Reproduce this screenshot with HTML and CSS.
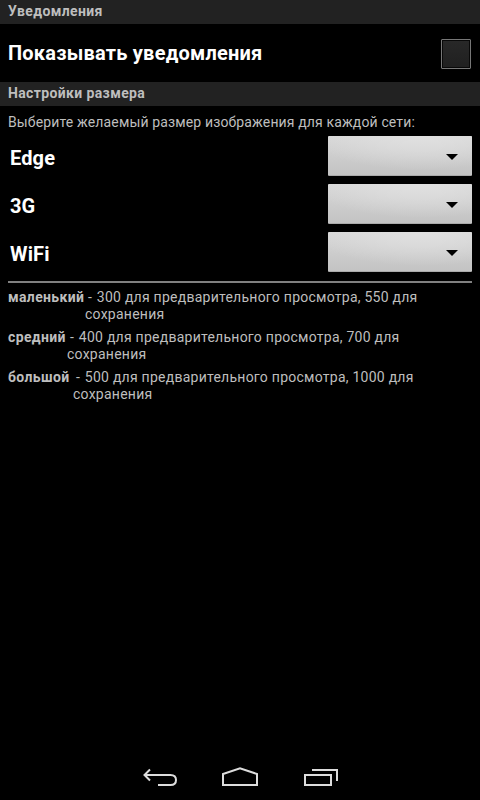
FILE: index.html
```html
<!DOCTYPE html>
<html lang="ru">
<head>
<meta charset="utf-8">
<title>Настройки</title>
<link rel="stylesheet" href="styles.css">
</head>
<body>
<main class="screen">
  <h2 class="section">Уведомления</h2>
  <div class="toggle"><span class="toggle-label">Показывать уведомления</span><span class="checkbox"></span></div>
  <h2 class="section">Настройки размера</h2>
  <p class="hint">Выберите желаемый размер изображения для каждой сети:</p>
  <div class="network"><span class="name">Edge</span><span class="spinner"><i class="arrow"></i></span></div>
  <div class="network"><span class="name">3G</span><span class="spinner"><i class="arrow"></i></span></div>
  <div class="network"><span class="name">WiFi</span><span class="spinner"><i class="arrow"></i></span></div>
  <hr class="divider">
  <dl class="sizes">
    <div class="size"><dt class="small">маленький</dt><dd><span class="dash">-</span> 300 для предварительного просмотра, 550 для<br>сохранения</dd></div>
    <div class="size"><dt class="medium">средний</dt><dd><span class="dash">-</span> 400 для предварительного просмотра, 700 для<br>сохранения</dd></div>
    <div class="size"><dt class="large">большой</dt><dd><span class="dash">-</span> 500 для предварительного просмотра, 1000 для<br>сохранения</dd></div>
  </dl>
  <nav class="navbar">
    <svg width="80" height="48" viewBox="120 752 80 48"><path d="M150 769.500L144.500 775L150 780.500M144.500 775H170.500Q176 775 176 780Q176 785 170.500 785H158"/></svg>
    <svg width="80" height="48" viewBox="200 752 80 48"><path d="M223 785V774L240 768.300L257 774V785Z"/></svg>
    <svg width="80" height="48" viewBox="280 752 80 48"><path d="M305 775H331V785H305ZM312 770H337V781"/></svg>
  </nav>
</main>
</body>
</html>
```

FILE: styles.css
```css
* { box-sizing: border-box; }
body { margin: 0; background: #000; font-family: Roboto, "Noto Sans", sans-serif; color: #bebebe; }
.screen { height: 800px; display: flex; flex-direction: column; }
.section { margin: 0; height: 24px; padding-left: 8px; font-size: 14px; line-height: 22px; font-weight: 700; letter-spacing: .37px; background: #222; color: #bebebe; }
.toggle { height: 58px; padding: 0 8px; display: flex; align-items: center; justify-content: space-between; color: #fff; font-size: 20px; font-weight: 700; letter-spacing: .22px; }
.checkbox { width: 30px; height: 30px; margin: 2px 1px 0 0; border: 1px solid #777; border-radius: 1px; background: linear-gradient(#282828, #202020); box-shadow: inset 0 0 0 1px #080808; }
.hint { margin: 0; padding: 8px 8px 0; height: 26px; font-size: 14px; line-height: 16px; letter-spacing: .14px; white-space: nowrap; }
.network { height: 48px; padding: 0 8px 0 10px; display: flex; align-items: center; justify-content: space-between; color: #fff; font-size: 20px; font-weight: 700; }
.name { padding-top: 4px; letter-spacing: .15px; }
.spinner { width: 144px; height: 40px; padding: 3px 14px 0 0; display: flex; align-items: center; justify-content: flex-end; background: radial-gradient(ellipse 110px 34px at 65% 0, #e0e0e0, transparent), linear-gradient(#d8d8d8, #c3c3c3); border-bottom: 1px solid #aaa; border-radius: 1px; }
.arrow { border: 6px solid transparent; border-top-color: #000; border-bottom: 0; }
.divider { width: 464px; height: 2px; margin: 5px 8px 6px; border: 0; background: #808080; }
.sizes { margin: 0; padding: 0 8px; font-size: 14px; line-height: 17px; }
.size { height: 40px; display: flex; white-space: nowrap; }
dt { font-weight: 700; flex: none; letter-spacing: .36px; }
dd { margin: 0; letter-spacing: .25px; }
.dash { padding: 0 1px 0 3px; }
.small { width: 77px; }
.medium { width: 59px; }
.large { width: 65px; }
.navbar { height: 48px; margin-top: auto; display: flex; justify-content: center; }
.navbar path { fill: none; stroke: #ddd; stroke-width: 2; }
```
